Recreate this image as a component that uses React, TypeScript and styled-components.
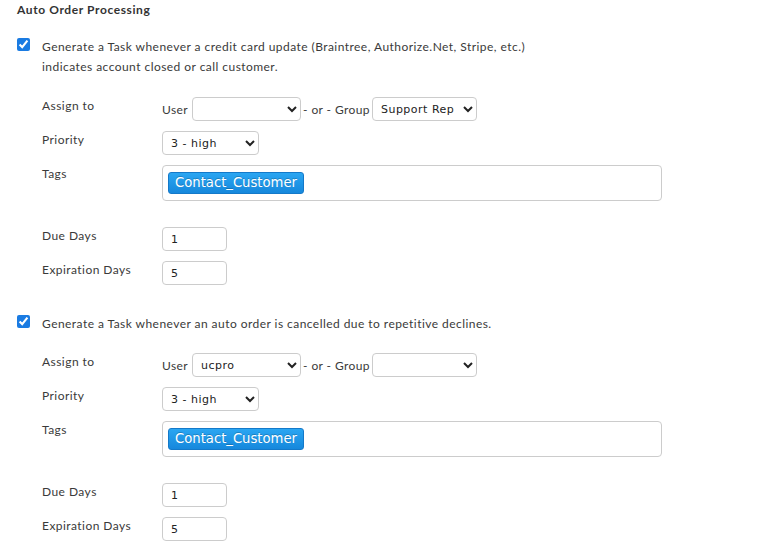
import React from 'react';
import styled, { createGlobalStyle } from 'styled-components';

const GlobalStyle = createGlobalStyle`
  body {
    margin: 0;
    background: #fff;
    font-family: Lato, "Liberation Sans", sans-serif;
    color: #333;
  }
`;

const Page = styled.div`
  padding: 0 17px;
`;

const Heading = styled.div`
  font-size: 12px;
  font-weight: 700;
  line-height: 20px;
  color: #333;
  letter-spacing: 0.6px;
  margin-bottom: 17px;
`;

const Block = styled.div<{ $gap?: number }>`
  margin-bottom: ${(p) => p.$gap ?? 0}px;
`;

const CheckRow = styled.label`
  display: flex;
  align-items: flex-start;
  gap: 12px;
  font-size: 12px;
  line-height: 20px;
  color: #3a3a3a;
  letter-spacing: 0.45px;
`;

const Check = styled.input`
  width: 13px;
  height: 13px;
  margin: 1px 0 0;
  accent-color: #1a7be2;
  flex: none;
`;

const CheckText = styled.span`
  max-width: 520px;
`;

const Form = styled.div<{ $top: number }>`
  display: grid;
  grid-template-columns: 120px auto;
  row-gap: 10px;
  margin: ${(p) => p.$top}px 0 0 25px;
`;

const Label = styled.div`
  font-size: 12px;
  line-height: 16px;
  padding-top: 1px;
  color: #3a3a3a;
  letter-spacing: 0.45px;
`;

const Field = styled.div<{ $after?: number }>`
  display: flex;
  align-items: center;
  margin-bottom: ${(p) => p.$after ?? 0}px;
  font-size: 12px;
  color: #3a3a3a;
`;

const Word = styled.span<{ $left?: number; $right?: number }>`
  margin: 0 ${(p) => p.$right ?? 4}px 0 ${(p) => p.$left ?? 0}px;
  letter-spacing: 0.4px;
`;

const Select = styled.select<{ $w: number }>`
  width: ${(p) => p.$w}px;
  height: 24px;
  box-sizing: border-box;
  border: 1px solid #ccc;
  border-radius: 4px;
  background: #fff;
  font-family: "DejaVu Sans", Verdana, sans-serif;
  font-size: 11px;
  letter-spacing: 0.5px;
  color: #222;
  padding: 0 4px;
  margin: 0;
`;

const TextInput = styled.input`
  width: 65px;
  height: 24px;
  box-sizing: border-box;
  border: 1px solid #ccc;
  border-radius: 4px;
  font-family: "DejaVu Sans", Verdana, sans-serif;
  font-size: 11px;
  color: #222;
  padding: 0 8px;
  margin: 0;
`;

const TagBox = styled.div`
  width: 500px;
  height: 36px;
  box-sizing: border-box;
  border: 1px solid #ccc;
  border-radius: 4px;
  padding: 6px 5px;
  display: flex;
  align-items: flex-start;
`;

const Tag = styled.span`
  display: inline-block;
  height: 22px;
  box-sizing: border-box;
  padding: 0 6px;
  border: 1px solid #1479c9;
  border-radius: 3px;
  background: linear-gradient(#2aa6f2, #1688dc);
  color: #fff;
  font-family: "DejaVu Sans", Verdana, sans-serif;
  font-size: 13.2px;
  line-height: 20px;
  text-shadow: 0 -1px 0 rgba(0, 0, 0, 0.2);
`;

type TaskProps = {
  text: React.ReactNode;
  user: string;
  group: string;
  formTop: number;
};

const TaskBlock = ({ text, user, group, formTop }: TaskProps) => (
  <>
    <CheckRow>
      <Check type="checkbox" defaultChecked />
      <CheckText>{text}</CheckText>
    </CheckRow>
    <Form $top={formTop}>
      <Label>Assign to</Label>
      <Field>
        <Word>User</Word>
        <Select $w={109} defaultValue={user}>
          <option value=""></option>
          <option value="ucpro">ucpro</option>
        </Select>
        <Word $left={2} $right={2}>- or - Group</Word>
        <Select $w={105} defaultValue={group}>
          <option value=""></option>
          <option value="Support Rep">Support Rep</option>
        </Select>
      </Field>
      <Label>Priority</Label>
      <Field>
        <Select $w={97} defaultValue="3">
          <option value="1">1 - low</option>
          <option value="2">2 - medium</option>
          <option value="3">3 - high</option>
        </Select>
      </Field>
      <Label>Tags</Label>
      <Field $after={16}>
        <TagBox>
          <Tag>Contact_Customer</Tag>
        </TagBox>
      </Field>
      <Label>Due Days</Label>
      <Field>
        <TextInput defaultValue="1" />
      </Field>
      <Label>Expiration Days</Label>
      <Field>
        <TextInput defaultValue="5" />
      </Field>
    </Form>
  </>
);

export default function App() {
  return (
    <Page>
      <GlobalStyle />
      <Heading>Auto Order Processing</Heading>
      <Block $gap={29}>
        <TaskBlock
          text="Generate a Task whenever a credit card update (Braintree, Authorize.Net, Stripe, etc.) indicates account closed or call customer."
          user=""
          group="Support Rep"
          formTop={20}
        />
      </Block>
      <Block>
        <TaskBlock
          text="Generate a Task whenever an auto order is cancelled due to repetitive declines."
          user="ucpro"
          group=""
          formTop={19}
        />
      </Block>
    </Page>
  );
}
